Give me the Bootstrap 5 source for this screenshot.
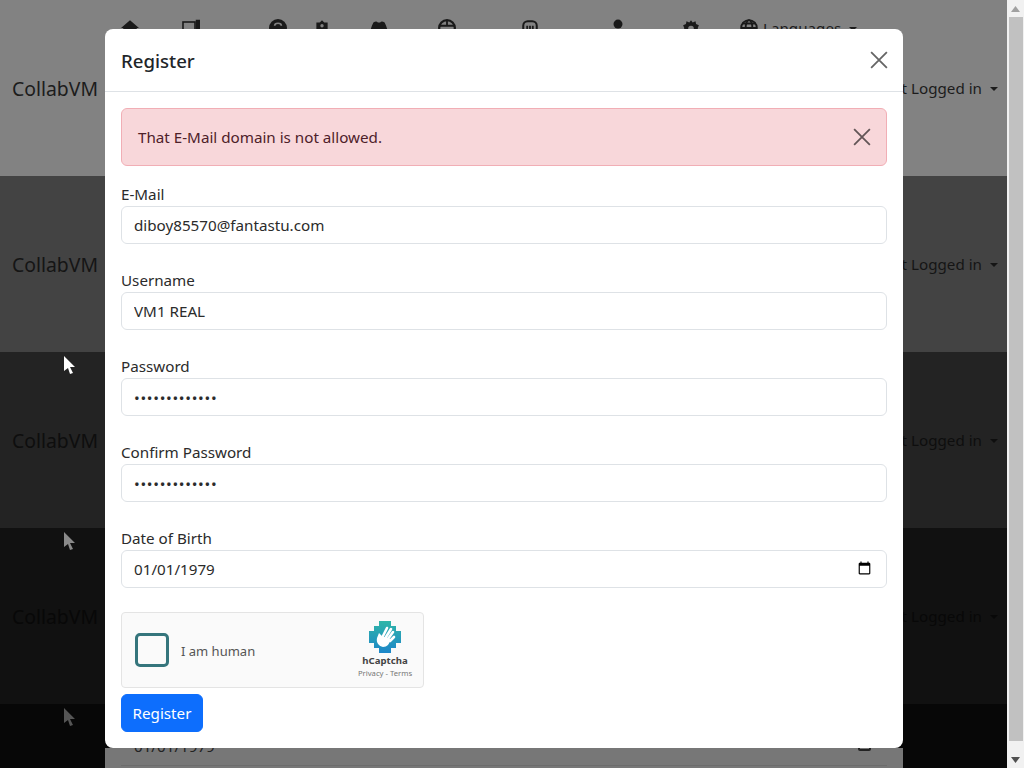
<!DOCTYPE html>
<html lang="en">
<head>
<meta charset="utf-8">
<title>CollabVM</title>
<link rel="stylesheet" href="https://cdn.jsdelivr.net/npm/bootstrap@5.3.0/dist/css/bootstrap.min.css">
<style>
html,body{height:100%;overflow:hidden}
body{font-family:"Noto Sans","Open Sans",sans-serif;background:#060606;font-size:15.2px}
.stage{width:1007px;height:768px;overflow:hidden;position:relative}
.sbar{position:fixed;top:0;right:0;width:17px;height:768px;background:#f1f1f1;display:flex;flex-direction:column;align-items:center}
.sbar i{display:block;width:14px;height:724px;background:#c1c1c1}
.sgap{flex:1}
.sarrow{height:17px;width:17px;display:flex;align-items:center;justify-content:center;font-size:0}
.band{height:176px;position:relative;display:flex;flex-direction:column;flex:none}
.b1{background:#828282;color:#1c1c1c}
.b2{background:#434343;color:#151515}
.b3{background:#232323;color:#0e0e0e}
.b4{background:#111;color:#080808}
.b5{background:#070707;color:#030303}
.barrow{height:176px;flex:none;padding:0 9px 0 12px;display:flex;align-items:center;justify-content:space-between}
.brandtxt{font-size:19.4px;line-height:27px}
.usertxt{line-height:24px;white-space:nowrap}
.caretx{display:inline-block;border-top:.3em solid;border-right:.3em solid transparent;border-left:.3em solid transparent;margin-left:8px;vertical-align:.2em}
.navrow{height:0;flex:none;margin-top:19px;margin-bottom:-19px;display:flex;align-items:flex-start;white-space:nowrap;color:#1c1c1c}
.navrow svg{width:18px;height:18px;flex:none;fill:#1a1a1a}
.i1{margin-left:121px}.i2{margin-left:43px}.i3{margin-left:69px}.i4{margin-left:26px}.i5{margin-left:39px}
.i6{margin-left:50px}.i7{margin-left:65px}.i8{margin-left:70px}.i9{margin-left:55px}.i10{margin-left:40px}
.navlang{margin:-3px 0 0 5px;line-height:24px}
.navrow svg.hollow{fill:none;stroke:#1a1a1a;stroke-width:1.6}
.cur{position:absolute;left:63px;top:4px;width:12px;height:19px}
.strip{position:absolute;left:105px;top:748px;width:798px;height:20px;background:#777;overflow:hidden}
.ghostdate{position:absolute;left:29px;top:-14px;line-height:24px;color:#222}
.ghostcal{position:absolute;left:753px;top:-4px;width:13px;height:7px;border:2px solid #222;border-radius:2px}
.ghostline{position:absolute;left:16px;right:16px;top:17px;border-top:1px solid #6c6c6c}
.dlg{position:fixed;left:105px;top:29px;width:798px;height:719px;background:#fff;border-radius:8px;overflow:hidden}
.dlg-h{height:63px;padding:0 16px;border-bottom:1px solid #dee2e6;display:flex;align-items:center;justify-content:space-between}
.dlg-h h5{font-size:18.6px;font-weight:500;margin:2px 0 0;color:#212529}
.dlg-h .xbtn{margin-right:-1px}
.xbtn{background:none;border:0;padding:0;line-height:0;opacity:.6}
.dlg-b{padding:16px}
.alert-x{height:58px;padding:0 15px 0 16px;margin-bottom:16px;display:flex;align-items:center;justify-content:space-between;color:#4e2129}
.fld{margin-bottom:16px;height:70px}
.fld label{display:block;line-height:24px;margin-bottom:0;color:#2b2b2b;height:24px}
.fld .form-control{height:38px;color:#2b2b2b;font-size:15.2px;font-family:inherit}
.fld input[type=password]{letter-spacing:.7px;padding-top:8px}
.capbox{width:303px;height:76px;background:#fafafa;border:1px solid #e4e4e4;border-radius:4px;margin-top:16px;display:flex;align-items:center;padding:0 13px;position:relative}
.capcheck{width:34px;height:34px;border:3px solid #35757c;border-radius:5px;flex:none}
.captxt{margin:3px 0 0 12px;font-size:13px;color:#555}
.caplogo{position:absolute;right:10px;top:8px;width:56px;text-align:center;line-height:1}
.capname{font-size:9.6px;font-weight:700;color:#444;display:block;margin-top:3px}
.capmini{font-size:7.7px;color:#777;white-space:nowrap;display:block;margin-top:4px}
.regbtn{margin-top:6px;width:82px;height:38px;padding:0;font-size:15.2px}
</style>
</head>
<body>
<div class="stage">
  <div class="band b1">
    <div class="navrow">
      <svg class="i1" viewBox="0 0 16 16"><path d="M8 1 0 8h2v7h12V8h2z"/></svg>
      <svg class="i2 hollow" viewBox="0 0 18 18"><rect x="1" y="3" width="12" height="14"/><rect x="15" y="2" width="2" height="8" stroke-width="2.500"/></svg>
      <svg class="i3" viewBox="0 0 16 16"><circle cx="8" cy="8" r="8"/><path d="M5 6c0-3 6-3 6 0" fill="none" stroke="#808080" stroke-width="1.500"/></svg>
      <svg class="i4" viewBox="0 0 16 16"><path d="M3 3h3l2-2 2 2h3v13H3z"/><circle cx="8" cy="6" r="1.500" fill="#808080"/></svg>
      <svg class="i5" viewBox="0 0 16 16"><path d="M3 3c2-1 3-1 4 0h2c1-1 2-1 4 0 2 4 3 8 3 10-2 1-3 1-4 0H4c-1 1-2 1-4 0 0-2 1-6 3-10z"/></svg>
      <svg class="i6 hollow" viewBox="0 0 16 16"><circle cx="8" cy="8" r="7" stroke-width="2"/><path d="M1 6h14M8 1v5"/></svg>
      <svg class="i7 hollow" viewBox="0 0 16 16"><rect x="2" y="2" width="12" height="12" rx="4" stroke-width="1.800"/><path d="M5.500 11V6M8 9V6M10.500 11V6"/></svg>
      <svg class="i8" viewBox="0 0 16 16"><circle cx="8" cy="4.500" r="4"/><path d="M2 16c0-5 12-5 12 0z"/></svg>
      <svg class="i9" viewBox="0 0 16 16"><path fill-rule="evenodd" d="M8 1l1.500 2 2.500-1 .5 2.500 2.500 1L14 8l1 7H1l1-7-1-2.500 2.500-1L4 2l2.500 1zM8 6a2.500 2.500 0 1 0 0 5 2.500 2.500 0 0 0 0-5z"/></svg>
      <svg class="i10 hollow" viewBox="0 0 16 16"><circle cx="8" cy="8" r="7"/><ellipse cx="8" cy="8" rx="3" ry="7"/><path d="M1 8h14M2 4h12M2 12h12"/></svg>
      <span class="navlang">Languages<span class="caretx"></span></span>
    </div>
    <div class="barrow"><span class="brandtxt">CollabVM</span><span class="usertxt">Not Logged in<span class="caretx"></span></span></div>
  </div>
  <div class="band b2"><div class="barrow"><span class="brandtxt">CollabVM</span><span class="usertxt">Not Logged in<span class="caretx"></span></span></div></div>
  <div class="band b3"><div class="barrow"><span class="brandtxt">CollabVM</span><span class="usertxt">Not Logged in<span class="caretx"></span></span></div>
    <svg class="cur" viewBox="0 0 12 19"><path d="M1 0v15l4-3 2 6 3-1-3-6h5z" fill="#fff"/></svg></div>
  <div class="band b4"><div class="barrow"><span class="brandtxt">CollabVM</span><span class="usertxt">Not Logged in<span class="caretx"></span></span></div>
    <svg class="cur" viewBox="0 0 12 19"><path d="M1 0v15l4-3 2 6 3-1-3-6h5z" fill="#8a8a8a"/></svg></div>
  <div class="band b5"><svg class="cur" viewBox="0 0 12 19"><path d="M1 0v15l4-3 2 6 3-1-3-6h5z" fill="#555"/></svg></div>
  <div class="strip"><span class="ghostdate">01/01/1979</span><span class="ghostcal"></span><span class="ghostline"></span></div>
</div>
<div class="sbar">
  <div class="sarrow"><svg width="9" height="6" viewBox="0 0 9 6"><path d="M4.500 0 9 6H0z" fill="#a0a0a0"/></svg></div>
  <i></i>
  <div class="sgap"></div>
  <div class="sarrow"><svg width="9" height="6" viewBox="0 0 9 6"><path d="M4.500 6 9 0H0z" fill="#505050"/></svg></div>
</div>
<div class="dlg">
  <div class="dlg-h"><h5>Register</h5>
    <button class="xbtn" type="button" aria-label="Close"><svg width="18" height="18" viewBox="0 0 16 16"><path d="M1 1l14 14M15 1 1 15" stroke="#000" stroke-width="1.600" fill="none"/></svg></button></div>
  <div class="dlg-b">
    <div class="alert alert-danger alert-x" role="alert"><span>That E-Mail domain is not allowed.</span>
      <button class="xbtn" type="button" aria-label="Close"><svg width="18" height="18" viewBox="0 0 16 16"><path d="M1 1l14 14M15 1 1 15" stroke="#000" stroke-width="1.600" fill="none"/></svg></button></div>
    <div class="fld"><label>E-Mail</label><input class="form-control" value="diboy85570@fantastu.com"></div>
    <div class="fld"><label>Username</label><input class="form-control" value="VM1 REAL"></div>
    <div class="fld"><label>Password</label><input class="form-control" type="password" value="aaaaaaaaaaaaa"></div>
    <div class="fld"><label>Confirm Password</label><input class="form-control" type="password" value="aaaaaaaaaaaaa"></div>
    <div class="fld"><label>Date of Birth</label><input class="form-control" type="date" value="1979-01-01"></div>
    <div class="capbox"><div class="capcheck"></div><span class="captxt">I am human</span>
      <div class="caplogo"><svg width="32" height="32" viewBox="0 0 32 32"><defs><linearGradient id="hg" x1="0" y1="0" x2="0" y2="1"><stop offset="0" stop-color="#2fb5a8"/><stop offset="1" stop-color="#1d86c9"/></linearGradient></defs><path d="M10 0h12v5h5v5h5v12h-5v5h-5v5H10v-5H5v-5H0V10h5V5h5z" fill="url(#hg)"/><g stroke="#fff" stroke-linecap="round" stroke-width="2.600" fill="none"><path d="M14 15l4-8M17 16l5-8M19 18l5-7M21 20l4-4"/></g><path d="M8 17l2-5 3 3 8 3c0 5-3 8-7 8-4-1-7-4-6-9z" fill="#fff"/></svg><span class="capname">hCaptcha</span><span class="capmini">Privacy - Terms</span></div></div>
    <button class="btn btn-primary regbtn" type="button">Register</button>
  </div>
</div>
</body>
</html>
